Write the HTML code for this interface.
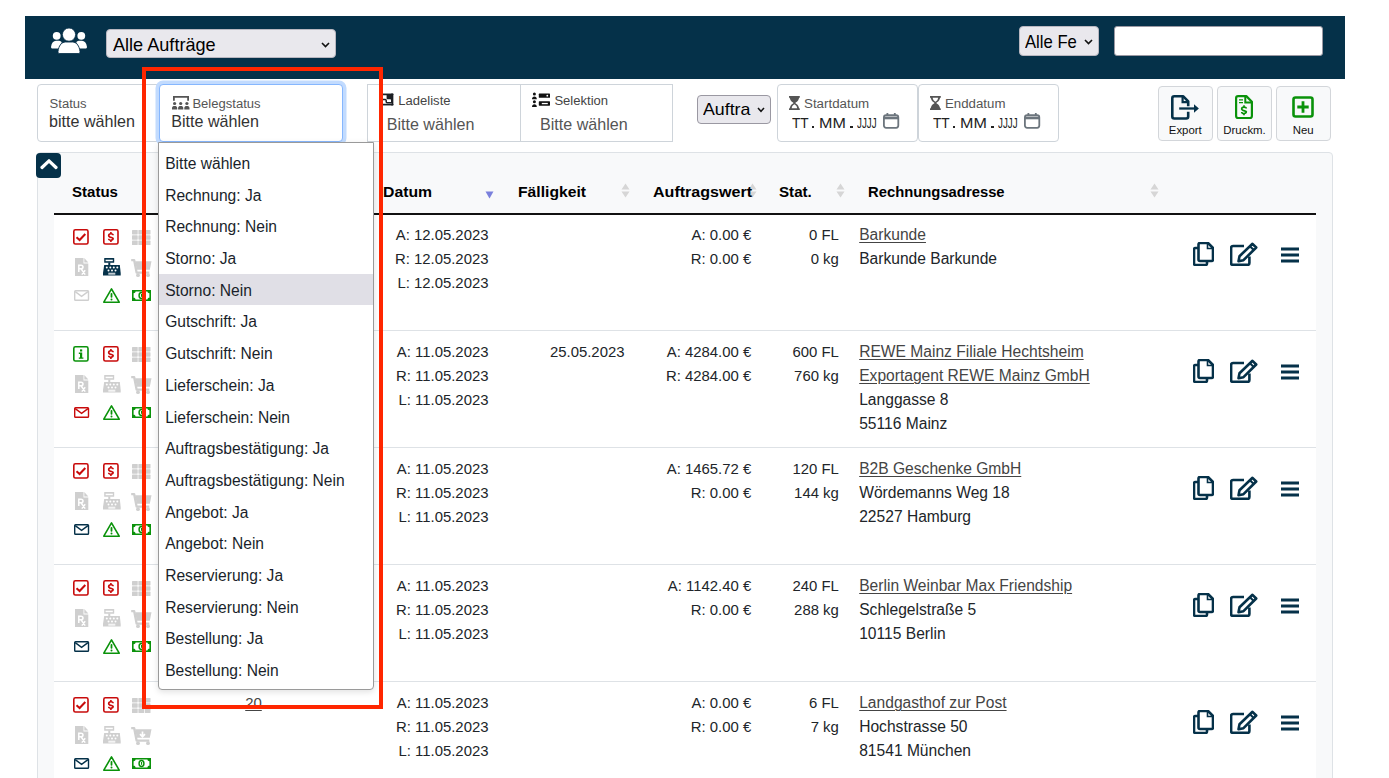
<!DOCTYPE html><html><head><meta charset="utf-8"><style>
html,body{margin:0;padding:0;background:#fff;width:1389px;height:778px;overflow:hidden;position:relative;font-family:"Liberation Sans",sans-serif;}
.t{position:absolute;white-space:nowrap;}
svg{display:block}
</style></head><body>
<div style="position:absolute;left:25.00px;top:16.00px;width:1320.00px;height:63.00px;background:#053149;"></div>
<svg style="position:absolute;left:51.00px;top:27.50px;" width="36.00" height="26.00" viewBox="0 0 36 26">
<circle cx="5.7" cy="7.8" r="3.9" fill="#fff"/>
<circle cx="30.3" cy="7.8" r="3.9" fill="#fff"/>
<path d="M1.5 20.5 C0.3 20.5 -0.1 19.6 0.1 18.4 C0.6 15 2.5 12.8 5 12.8 H7 C8.5 12.8 9.8 13.3 10.8 14.2 C9.5 15.8 8.6 18 8.3 20.5 Z" fill="#fff"/>
<path d="M34.5 20.5 C35.7 20.5 36.1 19.6 35.9 18.4 C35.4 15 33.5 12.8 31 12.8 H29 C27.5 12.8 26.2 13.3 25.2 14.2 C26.5 15.8 27.4 18 27.7 20.5 Z" fill="#fff"/>
<circle cx="18" cy="6.6" r="6.6" fill="#fff" stroke="#062e48" stroke-width="0.8"/>
<path d="M8.8 25.6 C7.4 25.6 6.8 24.7 7 23.4 C7.6 18 10.5 14 14.5 14 H21.5 C25.5 14 28.4 18 29 23.4 C29.2 24.7 28.6 25.6 27.2 25.6 Z" fill="#fff" stroke="#062e48" stroke-width="0.9"/>
</svg>
<div style="position:absolute;left:106.00px;top:29.00px;width:230.00px;height:29.00px;box-sizing:border-box;background:#e9e8ed;border:1px solid #b9b7c0;border-radius:4px;"></div>
<div class="t" style="left:112.50px;top:34.00px;font-size:18.10px;line-height:22px;color:#000;transform:scaleX(1.0007);transform-origin:0 0;">Alle Aufträge</div>
<svg style="position:absolute;left:320.50px;top:41.50px;" width="9.00" height="6.00" viewBox="0 0 9 6"><path d="M1 1 L4.5 4.6 L8 1" stroke="#111" stroke-width="1.6" fill="none"/></svg>
<div style="position:absolute;left:1019.00px;top:26.00px;width:80.00px;height:30.00px;box-sizing:border-box;background:#e9e8ed;border:1px solid #b9b7c0;border-radius:4px;"></div>
<div class="t" style="left:1025.40px;top:31.00px;font-size:18.10px;line-height:22px;color:#000;transform:scaleX(0.9202);transform-origin:0 0;">Alle Fe</div>
<svg style="position:absolute;left:1083.50px;top:38.50px;" width="9.00" height="6.00" viewBox="0 0 9 6"><path d="M1 1 L4.5 4.6 L8 1" stroke="#111" stroke-width="1.6" fill="none"/></svg>
<div style="position:absolute;left:1114.00px;top:26.00px;width:209.00px;height:30.00px;box-sizing:border-box;background:#fff;border:1px solid #9a98a2;border-radius:3px;"></div>
<div style="position:absolute;left:37.00px;top:84.00px;width:126.00px;height:57.50px;box-sizing:border-box;border:1px solid #ced4da;border-radius:4px 0 0 4px;background:#fff;"></div>
<div class="t" style="left:49.60px;top:96.00px;font-size:13.05px;line-height:16px;color:#555;">Status</div>
<div class="t" style="left:49.00px;top:112.00px;font-size:16.10px;line-height:19px;color:#333;">bitte wählen</div>
<div style="position:absolute;left:159.00px;top:84.00px;width:184.00px;height:57.50px;box-sizing:border-box;border:1px solid #86b7fe;border-radius:4px;background:#fff;box-shadow:0 0 0 3.5px #c2dbfe;"></div>
<svg style="position:absolute;left:172.00px;top:95.00px;" width="18.00" height="15.00" viewBox="0 0 18 15">
<path d="M1.9 5.8 V1.8 H16.1 V5.8" stroke="#555" stroke-width="1.8" fill="none"/>
<circle cx="2.6" cy="8.5" r="1.6" fill="#555"/><circle cx="8.7" cy="8.5" r="1.6" fill="#555"/><circle cx="14.9" cy="8.5" r="1.6" fill="#555"/>
<path d="M0 14.6 V13 C0 11.5 1 10.9 2.6 10.9 C4.2 10.9 5.2 11.5 5.2 13 V14.6 Z M6.1 14.6 V13 C6.1 11.5 7.1 10.9 8.7 10.9 C10.3 10.9 11.3 11.5 11.3 13 V14.6 Z M12.3 14.6 V13 C12.3 11.5 13.3 10.9 14.9 10.9 C16.5 10.9 17.5 11.5 17.5 13 V14.6 Z" fill="#555"/>
</svg>
<div class="t" style="left:192.40px;top:96.00px;font-size:13.05px;line-height:16px;color:#555;">Belegstatus</div>
<div class="t" style="left:171.30px;top:112.00px;font-size:16.10px;line-height:19px;color:#333;">Bitte wählen</div>
<div style="position:absolute;left:367.00px;top:84.00px;width:153.50px;height:57.50px;box-sizing:border-box;border:1px solid #ced4da;background:#fff;"></div>
<svg style="position:absolute;left:379.00px;top:93.00px;" width="15.00" height="13.00" viewBox="0 0 15 13">
<rect x="0.9" y="1.4" width="12.6" height="10.2" stroke="#1c1f24" stroke-width="1.7" fill="none"/>
<path d="M7.6 1.4 H13.5 V10.2 H12 V7.2 C12 6.6 11.6 6.2 11 6.2 H8.4 C7.9 6.2 7.6 5.9 7.6 5.4 Z" fill="#1c1f24"/>
<path d="M0.9 6.5 H6.3 C6.9 6.5 7.2 6.9 7.2 7.4 V8.8 C7.2 9.3 7.6 9.8 8.2 9.8 H12" stroke="#1c1f24" stroke-width="1.5" fill="none"/>
<path d="M12.6 0 L14.8 1.4 L12.6 2.8 Z M12.6 10.2 L14.8 11.6 L12.6 13 Z" fill="#1c1f24"/>
</svg>
<div class="t" style="left:398.30px;top:93.00px;font-size:13.05px;line-height:16px;color:#444;">Ladeliste</div>
<div class="t" style="left:386.70px;top:115.00px;font-size:16.10px;line-height:19px;color:#555;">Bitte wählen</div>
<div style="position:absolute;left:519.50px;top:84.00px;width:153.50px;height:57.50px;box-sizing:border-box;border:1px solid #ced4da;background:#fff;"></div>
<svg style="position:absolute;left:532.00px;top:92.00px;" width="18.00" height="16.00" viewBox="0 0 18 16">
<circle cx="2.4" cy="2" r="1.5" fill="#111"/><path d="M0 7.2 C0 5.2 1 4.4 2.4 4.4 C3.8 4.4 4.8 5.2 4.8 7.2Z" fill="#111"/>
<circle cx="2.4" cy="9.8" r="1.5" fill="#111"/><path d="M0 15 C0 13 1 12.2 2.4 12.2 C3.8 12.2 4.8 13 4.8 15Z" fill="#111"/>
<rect x="6.8" y="1.6" width="11.2" height="4.2" rx="0.6" fill="#111"/><circle cx="15.3" cy="3.7" r="0.9" fill="#fff"/>
<rect x="6.8" y="9.3" width="11.2" height="4.4" rx="0.6" fill="#111"/><rect x="9.8" y="10.9" width="6" height="1.3" fill="#fff"/>
</svg>
<div class="t" style="left:554.40px;top:93.00px;font-size:13.05px;line-height:16px;color:#444;">Selektion</div>
<div class="t" style="left:540.00px;top:115.00px;font-size:16.10px;line-height:19px;color:#555;">Bitte wählen</div>
<div style="position:absolute;left:697.00px;top:94.50px;width:74.00px;height:29.00px;box-sizing:border-box;background:#e9e8ed;border:1px solid #9a98a2;border-radius:4px;"></div>
<div class="t" style="left:703.00px;top:100.00px;font-size:16.20px;line-height:19px;color:#000;transform:scaleX(1.0982);transform-origin:0 0;">Auftra</div>
<svg style="position:absolute;left:756.50px;top:107.00px;" width="8.00" height="6.00" viewBox="0 0 8 6"><path d="M1 1 L4 4.3 L7 1" stroke="#111" stroke-width="1.5" fill="none"/></svg>
<div style="position:absolute;left:776.50px;top:84.00px;width:141.00px;height:57.50px;box-sizing:border-box;border:1px solid #ced4da;border-radius:4px;background:#fff;"></div>
<svg style="position:absolute;left:789.00px;top:96.00px;" width="11.00" height="14.00" viewBox="0 0 11 14"><path d="M0 0 H10.8 V1.4 C10.2 1.6 9.9 2 9.8 2.8 C9.4 5 7.2 6.3 6.2 7 C7.2 7.7 9.4 9 9.8 11.2 C9.9 12 10.2 12.4 10.8 12.6 V14 H0 V12.6 C0.6 12.4 0.9 12 1 11.2 C1.4 9 3.6 7.7 4.6 7 C3.6 6.3 1.4 5 1 2.8 C0.9 2 0.6 1.6 0 1.4 Z" fill="#555"/><path d="M5.4 8.3 C6.8 9.1 8 10.2 8.1 12.2 H2.7 C2.8 10.2 4 9.1 5.4 8.3 Z" fill="#fff"/></svg>
<div class="t" style="left:803.80px;top:96.00px;font-size:13.05px;line-height:16px;color:#555;transform:scaleX(1.0217);transform-origin:0 0;">Startdatum</div>
<div class="t" style="left:791.90px;top:114.00px;font-size:15.00px;line-height:18px;color:#222;transform:scaleX(0.9126);transform-origin:0 0;">TT</div>
<div style="position:absolute;left:811.90px;top:125.60px;width:2.40px;height:2.40px;background:#222;"></div>
<div class="t" style="left:818.80px;top:114.00px;font-size:15.00px;line-height:18px;color:#222;transform:scaleX(1.0731);transform-origin:0 0;">MM</div>
<div style="position:absolute;left:850.40px;top:125.60px;width:2.40px;height:2.40px;background:#222;"></div>
<div class="t" style="left:856.70px;top:114.00px;font-size:15.00px;line-height:18px;color:#222;transform:scaleX(0.6533);transform-origin:0 0;">JJJJ</div>
<svg style="position:absolute;left:882.80px;top:113.20px;" width="17.00" height="16.00" viewBox="0 0 17 16"><rect x="0.9" y="2.2" width="14.4" height="12.6" rx="2.2" stroke="#6c757d" stroke-width="1.8" fill="none"/><path d="M1 3.5 H15.2 V6.3 H1 Z" fill="#6c757d"/><path d="M4.4 0 V3 M11.8 0 V3" stroke="#6c757d" stroke-width="1.8"/></svg>
<div style="position:absolute;left:917.50px;top:84.00px;width:141.00px;height:57.50px;box-sizing:border-box;border:1px solid #ced4da;border-radius:4px;background:#fff;"></div>
<svg style="position:absolute;left:930.00px;top:96.00px;" width="11.00" height="14.00" viewBox="0 0 11 14"><path d="M0 0 H10.8 V1.4 C10.2 1.6 9.9 2 9.8 2.8 C9.4 5 7.2 6.3 6.2 7 C7.2 7.7 9.4 9 9.8 11.2 C9.9 12 10.2 12.4 10.8 12.6 V14 H0 V12.6 C0.6 12.4 0.9 12 1 11.2 C1.4 9 3.6 7.7 4.6 7 C3.6 6.3 1.4 5 1 2.8 C0.9 2 0.6 1.6 0 1.4 Z" fill="#555"/><path d="M5.4 5.7 C6.8 4.9 8 3.8 8.1 1.8 H2.7 C2.8 3.8 4 4.9 5.4 5.7 Z" fill="#fff"/></svg>
<div class="t" style="left:944.80px;top:96.00px;font-size:13.05px;line-height:16px;color:#555;transform:scaleX(1.0167);transform-origin:0 0;">Enddatum</div>
<div class="t" style="left:932.90px;top:114.00px;font-size:15.00px;line-height:18px;color:#222;transform:scaleX(0.9126);transform-origin:0 0;">TT</div>
<div style="position:absolute;left:952.90px;top:125.60px;width:2.40px;height:2.40px;background:#222;"></div>
<div class="t" style="left:959.80px;top:114.00px;font-size:15.00px;line-height:18px;color:#222;transform:scaleX(1.0731);transform-origin:0 0;">MM</div>
<div style="position:absolute;left:991.40px;top:125.60px;width:2.40px;height:2.40px;background:#222;"></div>
<div class="t" style="left:997.70px;top:114.00px;font-size:15.00px;line-height:18px;color:#222;transform:scaleX(0.6533);transform-origin:0 0;">JJJJ</div>
<svg style="position:absolute;left:1023.80px;top:113.20px;" width="17.00" height="16.00" viewBox="0 0 17 16"><rect x="0.9" y="2.2" width="14.4" height="12.6" rx="2.2" stroke="#6c757d" stroke-width="1.8" fill="none"/><path d="M1 3.5 H15.2 V6.3 H1 Z" fill="#6c757d"/><path d="M4.4 0 V3 M11.8 0 V3" stroke="#6c757d" stroke-width="1.8"/></svg>
<div style="position:absolute;left:1158.00px;top:86.00px;width:54.50px;height:54.50px;box-sizing:border-box;border:1px solid #d3d6da;border-radius:4px;background:#f8f9fa;"></div>
<svg style="position:absolute;left:1171px;top:95px" width="29" height="25" viewBox="0 0 29 25"><path d="M17.2 11.3 V6.3 L12.3 1.3 H3.3 C2.2 1.3 1.3 2.2 1.3 3.3 V21.5 C1.3 22.6 2.2 23.5 3.3 23.5 H15.2 C16.3 23.5 17.2 22.6 17.2 21.5 V16.8" stroke="#053149" stroke-width="2.6" fill="none" stroke-linejoin="round"/><path d="M11.6 1.5 V7.1 H17" stroke="#053149" stroke-width="2.2" fill="none"/><path d="M8.2 13.5 H23.5" stroke="#053149" stroke-width="2.3"/><path d="M23 9.3 L27.9 13.5 L23 17.7 Z" fill="#053149"/></svg>
<div class="t" style="left:1185.25px;width:0;display:flex;justify-content:center;top:123.00px;font-size:11.40px;line-height:14px;color:#111;">Export</div>
<div style="position:absolute;left:1217.30px;top:86.00px;width:54.50px;height:54.50px;box-sizing:border-box;border:1px solid #d3d6da;border-radius:4px;background:#f8f9fa;"></div>
<svg style="position:absolute;left:1235px;top:94.7px" width="18" height="25" viewBox="0 0 18 25"><path d="M11.3 1.1 H3.1 C2 1.1 1.1 2 1.1 3.1 V21 C1.1 22.1 2 23 3.1 23 H14.9 C16 23 16.9 22.1 16.9 21 V6.7 Z" stroke="#0a920a" stroke-width="2.2" fill="none" stroke-linejoin="round"/><path d="M10.3 1.5 V7.5 H16.5" stroke="#0a920a" stroke-width="2" fill="none"/><path d="M4 4.8 H8 M4 7.6 H8" stroke="#0a920a" stroke-width="1.2"/><path d="M9 10.3 V12.100000000000001 M9 18.5 V20.3" stroke="#0a920a" stroke-width="1.6"/><path d="M11.3 13.600000000000001 C11.3 11.5 6.7 11.5 6.7 14.0 C6.7 16.0 11.3 15.600000000000001 11.3 16.6 C11.3 19.1 6.7 19.1 6.7 17.0" stroke="#0a920a" stroke-width="1.7" fill="none"/></svg>
<div class="t" style="left:1244.55px;width:0;display:flex;justify-content:center;top:123.00px;font-size:11.40px;line-height:14px;color:#111;">Druckm.</div>
<div style="position:absolute;left:1276.00px;top:86.00px;width:54.50px;height:54.50px;box-sizing:border-box;border:1px solid #d3d6da;border-radius:4px;background:#f8f9fa;"></div>
<svg style="position:absolute;left:1292.0px;top:96px" width="22" height="22" viewBox="0 0 22 22"><rect x="1.5" y="1.5" width="19" height="19" rx="2" stroke="#0a920a" stroke-width="2.6" fill="none"/><path d="M11 5.3 V16.7 M5.3 11 H16.7" stroke="#0a920a" stroke-width="2.8"/></svg>
<div class="t" style="left:1303.25px;width:0;display:flex;justify-content:center;top:123.00px;font-size:11.40px;line-height:14px;color:#111;">Neu</div>
<div style="position:absolute;left:37.00px;top:152.00px;width:1296.00px;height:640.00px;box-sizing:border-box;border:1px solid #dee2e6;border-radius:4px;background:#f8f9fa;"></div>
<div style="position:absolute;left:36.00px;top:153.00px;width:25.00px;height:25.00px;background:#053149;border-radius:4px;"></div>
<svg style="position:absolute;left:39.50px;top:158.00px;" width="18.00" height="12.00" viewBox="0 0 18 12"><path d="M2 9.5 L9 2.8 L16 9.5" stroke="#fff" stroke-width="3.2" fill="none" stroke-linecap="round" stroke-linejoin="round"/></svg>
<svg style="position:absolute;left:485.30px;top:190.50px;" width="9.00" height="8.00" viewBox="0 0 9 8"><path d="M0.5 0.5 H8.5 L4.5 7.5 Z" fill="#7a80dc"/></svg>
<svg style="position:absolute;left:621.30px;top:183.00px;" width="9.00" height="15.00" viewBox="0 0 9 15"><path d="M4.5 0.5 L8.5 6.5 H0.5 Z M4.5 14.5 L8.5 8.5 H0.5 Z" fill="#d6d6d6"/></svg>
<svg style="position:absolute;left:748.00px;top:183.00px;" width="9.00" height="15.00" viewBox="0 0 9 15"><path d="M4.5 0.5 L8.5 6.5 H0.5 Z M4.5 14.5 L8.5 8.5 H0.5 Z" fill="#d6d6d6"/></svg>
<svg style="position:absolute;left:835.50px;top:183.00px;" width="9.00" height="15.00" viewBox="0 0 9 15"><path d="M4.5 0.5 L8.5 6.5 H0.5 Z M4.5 14.5 L8.5 8.5 H0.5 Z" fill="#d6d6d6"/></svg>
<svg style="position:absolute;left:1150.00px;top:183.00px;" width="9.00" height="15.00" viewBox="0 0 9 15"><path d="M4.5 0.5 L8.5 6.5 H0.5 Z M4.5 14.5 L8.5 8.5 H0.5 Z" fill="#d6d6d6"/></svg>
<div class="t" style="left:71.90px;top:182.00px;font-size:15.50px;line-height:19px;font-weight:700;color:#000;transform:scaleX(0.9693);transform-origin:0 0;">Status</div>
<div class="t" style="left:382.80px;top:182.00px;font-size:15.50px;line-height:19px;font-weight:700;color:#000;transform:scaleX(1.0165);transform-origin:0 0;">Datum</div>
<div class="t" style="left:517.90px;top:182.00px;font-size:15.50px;line-height:19px;font-weight:700;color:#000;transform:scaleX(1.0120);transform-origin:0 0;">Fälligkeit</div>
<div class="t" style="left:653.30px;top:182.00px;font-size:15.50px;line-height:19px;font-weight:700;color:#000;transform:scaleX(1.0362);transform-origin:0 0;">Auftragswert</div>
<div class="t" style="left:779.00px;top:182.00px;font-size:15.50px;line-height:19px;font-weight:700;color:#000;transform:scaleX(0.9774);transform-origin:0 0;">Stat.</div>
<div class="t" style="left:867.80px;top:182.00px;font-size:15.50px;line-height:19px;font-weight:700;color:#000;transform:scaleX(0.9553);transform-origin:0 0;">Rechnungsadresse</div>
<div style="position:absolute;left:54.00px;top:213.00px;width:1262.00px;height:2.00px;background:#111;"></div>
<div style="position:absolute;left:54.00px;top:215.00px;width:1262.00px;height:563.00px;background:#fff;"></div>
<div style="position:absolute;left:54.00px;top:330.00px;width:1262.00px;height:1.00px;background:#dee2e6;"></div>
<div style="position:absolute;left:54.00px;top:447.00px;width:1262.00px;height:1.00px;background:#dee2e6;"></div>
<div style="position:absolute;left:54.00px;top:564.00px;width:1262.00px;height:1.00px;background:#dee2e6;"></div>
<div style="position:absolute;left:54.00px;top:681.00px;width:1262.00px;height:1.00px;background:#dee2e6;"></div>
<svg style="position:absolute;left:73.20px;top:229.00px;" width="16.00" height="16.00" viewBox="0 0 16 16"><rect x="0.8" y="0.8" width="14.2" height="14.2" rx="1.6" stroke="#c80b0b" stroke-width="1.6" fill="none"/><path d="M3.5 8.2 L6.6 11 L12.3 5" stroke="#c80b0b" stroke-width="2" fill="none"/></svg>
<svg style="position:absolute;left:103.20px;top:229.00px;" width="16.00" height="16.00" viewBox="0 0 16 16"><rect x="0.8" y="0.8" width="14.2" height="14.2" rx="1.6" stroke="#c80b0b" stroke-width="1.6" fill="none"/><path d="M7.9 3.0 V4.8 M7.9 11.2 V13.0" stroke="#c80b0b" stroke-width="1.6"/><path d="M10.100000000000001 6.3 C10.100000000000001 4.2 5.7 4.2 5.7 6.7 C5.7 8.7 10.100000000000001 8.3 10.100000000000001 9.3 C10.100000000000001 11.8 5.7 11.8 5.7 9.7" stroke="#c80b0b" stroke-width="1.7" fill="none"/></svg>
<svg style="position:absolute;left:132.20px;top:229.50px;" width="19.00" height="16.00" viewBox="0 0 19 16"><rect x="0.0" y="0.0" width="5.7" height="4.4" rx="0.6" fill="#cfcfcf"/><rect x="0.0" y="5.3" width="5.7" height="4.4" rx="0.6" fill="#cfcfcf"/><rect x="0.0" y="10.6" width="5.7" height="4.4" rx="0.6" fill="#cfcfcf"/><rect x="6.4" y="0.0" width="5.7" height="4.4" rx="0.6" fill="#cfcfcf"/><rect x="6.4" y="5.3" width="5.7" height="4.4" rx="0.6" fill="#cfcfcf"/><rect x="6.4" y="10.6" width="5.7" height="4.4" rx="0.6" fill="#cfcfcf"/><rect x="12.8" y="0.0" width="5.7" height="4.4" rx="0.6" fill="#cfcfcf"/><rect x="12.8" y="5.3" width="5.7" height="4.4" rx="0.6" fill="#cfcfcf"/><rect x="12.8" y="10.6" width="5.7" height="4.4" rx="0.6" fill="#cfcfcf"/></svg>
<svg style="position:absolute;left:74.80px;top:258.00px;" width="14.00" height="18.00" viewBox="0 0 14 18"><path d="M0 0 H8.5 V5.5 H13.3 V18 H0 Z" fill="#cfcfcf"/><path d="M9.3 0 L13.3 4.5 H9.3 Z" fill="#cfcfcf"/><path d="M3.8 14 V7.2 H6 C7.3 7.2 8 7.9 8 9 C8 10.1 7.3 10.8 6 10.8 H3.8 M6 10.8 L10.2 16.6 M10.2 12.2 L6.8 16.6" stroke="#fff" stroke-width="1.5" fill="none"/></svg>
<svg style="position:absolute;left:102.70px;top:258.00px;" width="18.00" height="18.00" viewBox="0 0 18 18"><rect x="1.2" y="0" width="10" height="4.8" rx="0.5" fill="#053149"/><rect x="2.6" y="1.7" width="7.2" height="1.5" fill="#fff"/><rect x="5.3" y="4.5" width="2" height="3" fill="#053149"/><path d="M1.2 7 H16.8 L17.7 15 V17.6 H0 V15 Z" fill="#053149"/><circle cx="3.8" cy="9.4" r="1" fill="#fff"/><circle cx="7.3" cy="9.4" r="1" fill="#fff"/><circle cx="10.8" cy="9.4" r="1" fill="#fff"/><circle cx="14.3" cy="9.4" r="1" fill="#fff"/><circle cx="5.5" cy="12.4" r="1" fill="#fff"/><circle cx="9.0" cy="12.4" r="1" fill="#fff"/><circle cx="12.5" cy="12.4" r="1" fill="#fff"/><rect x="5.3" y="14.7" width="7" height="2" fill="#fff" opacity="0.75"/></svg>
<svg style="position:absolute;left:131.00px;top:258.50px;" width="21.00" height="19.00" viewBox="0 0 21 19"><path d="M0.2 1.2 H3.2 L5.6 13.6 H18.3" stroke="#cfcfcf" stroke-width="2.3" fill="none" stroke-linejoin="round"/><path d="M4.2 2.3 H20.5 L18.8 10.8 H5.8 Z" fill="#cfcfcf"/><circle cx="7" cy="16.2" r="1.9" fill="#cfcfcf"/><circle cx="17" cy="16.2" r="1.9" fill="#cfcfcf"/></svg>
<svg style="position:absolute;left:74.00px;top:290.00px;" width="16.00" height="12.00" viewBox="0 0 16 12"><rect x="0.7" y="0.7" width="13.8" height="9.6" rx="0.8" stroke="#cfcfcf" stroke-width="1.4" fill="none"/><path d="M1.2 1.6 L7.6 6.4 L14 1.6" stroke="#cfcfcf" stroke-width="1.4" fill="none"/></svg>
<svg style="position:absolute;left:102.80px;top:287.80px;" width="18.00" height="16.00" viewBox="0 0 18 16"><path d="M8.5 0.9 L16.2 14.2 H0.8 Z" stroke="#0a920a" stroke-width="1.6" fill="none" stroke-linejoin="round"/><rect x="7.6" y="5" width="1.8" height="4.8" rx="0.8" fill="#0a920a"/><circle cx="8.5" cy="11.6" r="1" fill="#0a920a"/></svg>
<svg style="position:absolute;left:132.20px;top:290.00px;" width="20.00" height="12.00" viewBox="0 0 20 12"><path d="M0 0 H19 V11 H0 Z M1.6 3.2 C2.8 3.2 3.4 2.6 3.6 1.5 H15.4 C15.6 2.6 16.2 3.2 17.4 3.2 V7.8 C16.2 7.8 15.6 8.4 15.4 9.5 H3.6 C3.4 8.4 2.8 7.8 1.6 7.8 Z" fill="#0a920a" fill-rule="evenodd"/><ellipse cx="9.5" cy="5.4" rx="2.4" ry="3" stroke="#0a920a" stroke-width="1.5" fill="none"/><rect x="9" y="4" width="1.1" height="2.8" fill="#0a920a"/></svg>
<div class="t" style="right:900.50px;top:226.00px;font-size:14.90px;line-height:18px;color:#212529;">A: 12.05.2023</div>
<div class="t" style="right:900.50px;top:250.00px;font-size:14.90px;line-height:18px;color:#212529;">R: 12.05.2023</div>
<div class="t" style="right:900.50px;top:274.00px;font-size:14.90px;line-height:18px;color:#212529;">L: 12.05.2023</div>
<div class="t" style="right:637.80px;top:226.00px;font-size:14.90px;line-height:18px;color:#212529;">A: 0.00 €</div>
<div class="t" style="right:637.80px;top:250.00px;font-size:14.90px;line-height:18px;color:#212529;">R: 0.00 €</div>
<div class="t" style="right:550.20px;top:226.00px;font-size:14.90px;line-height:18px;color:#212529;">0 FL</div>
<div class="t" style="right:550.20px;top:250.00px;font-size:14.90px;line-height:18px;color:#212529;">0 kg</div>
<div class="t" style="left:859.20px;top:225.00px;font-size:15.60px;line-height:19px;color:#444;text-decoration:underline;text-decoration-thickness:1px;text-underline-offset:2px;">Barkunde</div>
<div class="t" style="left:859.20px;top:249.00px;font-size:15.60px;line-height:19px;color:#212529;">Barkunde Barkunde</div>
<svg style="position:absolute;left:1193.00px;top:242.00px;" width="21.00" height="24.00" viewBox="0 0 21 24"><path d="M14 19.5 V21.5 C14 22.3 13.3 23 12.5 23 H2.5 C1.7 23 1 22.3 1 21.5 V7.5 C1 6.7 1.7 6 2.5 6 H5" stroke="#053149" stroke-width="2.6" fill="none"/><path d="M5.5 2.5 C5.5 1.7 6.2 1 7 1 H15 L20 6 V17.5 C20 18.3 19.3 19 18.5 19 H7 C6.2 19 5.5 18.3 5.5 17.5 Z" stroke="#053149" stroke-width="2.6" fill="none" stroke-linejoin="round"/><path d="M14.5 1.5 V6.5 H19.5" stroke="#053149" stroke-width="1.6" fill="none"/></svg>
<svg style="position:absolute;left:1230.00px;top:242.00px;" width="28.00" height="24.00" viewBox="0 0 28 24"><path d="M14 4 H3 C1.9 4 1.1 4.8 1.1 5.9 V21 C1.1 22.1 1.9 22.9 3 22.9 H17.5 C18.6 22.9 19.4 22.1 19.4 21 V14.5" stroke="#053149" stroke-width="2.6" fill="none"/><path d="M22.5 1.8 L26.2 5.5 L13.5 18.2 L8.5 19.2 L9.5 14.2 Z" stroke="#053149" stroke-width="2.6" fill="none" stroke-linejoin="round"/><path d="M20 4.3 L23.7 8" stroke="#053149" stroke-width="2"/></svg>
<svg style="position:absolute;left:1281.00px;top:246.50px;" width="18.00" height="16.00" viewBox="0 0 18 16"><path d="M0 2 H18 M0 8 H18 M0 14 H18" stroke="#053149" stroke-width="3"/></svg>
<svg style="position:absolute;left:73.20px;top:346.00px;" width="16.00" height="16.00" viewBox="0 0 16 16"><rect x="0.8" y="0.8" width="14.2" height="14.2" rx="1.6" stroke="#0a920a" stroke-width="1.6" fill="none"/><rect x="7" y="3.4" width="2.2" height="2.1" fill="#0a920a"/><path d="M5.8 6.6 H9.2 V11.4 H10.4 V12.8 H5.8 V11.4 H7 V8 H5.8 Z" fill="#0a920a"/></svg>
<svg style="position:absolute;left:103.20px;top:346.00px;" width="16.00" height="16.00" viewBox="0 0 16 16"><rect x="0.8" y="0.8" width="14.2" height="14.2" rx="1.6" stroke="#c80b0b" stroke-width="1.6" fill="none"/><path d="M7.9 3.0 V4.8 M7.9 11.2 V13.0" stroke="#c80b0b" stroke-width="1.6"/><path d="M10.100000000000001 6.3 C10.100000000000001 4.2 5.7 4.2 5.7 6.7 C5.7 8.7 10.100000000000001 8.3 10.100000000000001 9.3 C10.100000000000001 11.8 5.7 11.8 5.7 9.7" stroke="#c80b0b" stroke-width="1.7" fill="none"/></svg>
<svg style="position:absolute;left:132.20px;top:346.50px;" width="19.00" height="16.00" viewBox="0 0 19 16"><rect x="0.0" y="0.0" width="5.7" height="4.4" rx="0.6" fill="#cfcfcf"/><rect x="0.0" y="5.3" width="5.7" height="4.4" rx="0.6" fill="#cfcfcf"/><rect x="0.0" y="10.6" width="5.7" height="4.4" rx="0.6" fill="#cfcfcf"/><rect x="6.4" y="0.0" width="5.7" height="4.4" rx="0.6" fill="#cfcfcf"/><rect x="6.4" y="5.3" width="5.7" height="4.4" rx="0.6" fill="#cfcfcf"/><rect x="6.4" y="10.6" width="5.7" height="4.4" rx="0.6" fill="#cfcfcf"/><rect x="12.8" y="0.0" width="5.7" height="4.4" rx="0.6" fill="#cfcfcf"/><rect x="12.8" y="5.3" width="5.7" height="4.4" rx="0.6" fill="#cfcfcf"/><rect x="12.8" y="10.6" width="5.7" height="4.4" rx="0.6" fill="#cfcfcf"/></svg>
<svg style="position:absolute;left:74.80px;top:375.00px;" width="14.00" height="18.00" viewBox="0 0 14 18"><path d="M0 0 H8.5 V5.5 H13.3 V18 H0 Z" fill="#cfcfcf"/><path d="M9.3 0 L13.3 4.5 H9.3 Z" fill="#cfcfcf"/><path d="M3.8 14 V7.2 H6 C7.3 7.2 8 7.9 8 9 C8 10.1 7.3 10.8 6 10.8 H3.8 M6 10.8 L10.2 16.6 M10.2 12.2 L6.8 16.6" stroke="#fff" stroke-width="1.5" fill="none"/></svg>
<svg style="position:absolute;left:102.70px;top:375.00px;" width="18.00" height="18.00" viewBox="0 0 18 18"><rect x="1.2" y="0" width="10" height="4.8" rx="0.5" fill="#cfcfcf"/><rect x="2.6" y="1.7" width="7.2" height="1.5" fill="#fff"/><rect x="5.3" y="4.5" width="2" height="3" fill="#cfcfcf"/><path d="M1.2 7 H16.8 L17.7 15 V17.6 H0 V15 Z" fill="#cfcfcf"/><circle cx="3.8" cy="9.4" r="1" fill="#fff"/><circle cx="7.3" cy="9.4" r="1" fill="#fff"/><circle cx="10.8" cy="9.4" r="1" fill="#fff"/><circle cx="14.3" cy="9.4" r="1" fill="#fff"/><circle cx="5.5" cy="12.4" r="1" fill="#fff"/><circle cx="9.0" cy="12.4" r="1" fill="#fff"/><circle cx="12.5" cy="12.4" r="1" fill="#fff"/><rect x="5.3" y="14.7" width="7" height="2" fill="#fff" opacity="0.75"/></svg>
<svg style="position:absolute;left:131.00px;top:375.50px;" width="21.00" height="19.00" viewBox="0 0 21 19"><path d="M0.2 1.2 H3.2 L5.6 13.6 H18.3" stroke="#cfcfcf" stroke-width="2.3" fill="none" stroke-linejoin="round"/><path d="M4.2 2.3 H20.5 L18.8 10.8 H5.8 Z" fill="#cfcfcf"/><circle cx="7" cy="16.2" r="1.9" fill="#cfcfcf"/><circle cx="17" cy="16.2" r="1.9" fill="#cfcfcf"/></svg>
<svg style="position:absolute;left:74.00px;top:407.00px;" width="16.00" height="12.00" viewBox="0 0 16 12"><rect x="0.7" y="0.7" width="13.8" height="9.6" rx="0.8" stroke="#c80b0b" stroke-width="1.4" fill="none"/><path d="M1.2 1.6 L7.6 6.4 L14 1.6" stroke="#c80b0b" stroke-width="1.4" fill="none"/></svg>
<svg style="position:absolute;left:102.80px;top:404.80px;" width="18.00" height="16.00" viewBox="0 0 18 16"><path d="M8.5 0.9 L16.2 14.2 H0.8 Z" stroke="#0a920a" stroke-width="1.6" fill="none" stroke-linejoin="round"/><rect x="7.6" y="5" width="1.8" height="4.8" rx="0.8" fill="#0a920a"/><circle cx="8.5" cy="11.6" r="1" fill="#0a920a"/></svg>
<svg style="position:absolute;left:132.20px;top:407.00px;" width="20.00" height="12.00" viewBox="0 0 20 12"><path d="M0 0 H19 V11 H0 Z M1.6 3.2 C2.8 3.2 3.4 2.6 3.6 1.5 H15.4 C15.6 2.6 16.2 3.2 17.4 3.2 V7.8 C16.2 7.8 15.6 8.4 15.4 9.5 H3.6 C3.4 8.4 2.8 7.8 1.6 7.8 Z" fill="#0a920a" fill-rule="evenodd"/><ellipse cx="9.5" cy="5.4" rx="2.4" ry="3" stroke="#0a920a" stroke-width="1.5" fill="none"/><rect x="9" y="4" width="1.1" height="2.8" fill="#0a920a"/></svg>
<div class="t" style="right:900.50px;top:343.00px;font-size:14.90px;line-height:18px;color:#212529;">A: 11.05.2023</div>
<div class="t" style="right:900.50px;top:367.00px;font-size:14.90px;line-height:18px;color:#212529;">R: 11.05.2023</div>
<div class="t" style="right:900.50px;top:391.00px;font-size:14.90px;line-height:18px;color:#212529;">L: 11.05.2023</div>
<div class="t" style="right:764.50px;top:343.00px;font-size:14.90px;line-height:18px;color:#212529;">25.05.2023</div>
<div class="t" style="right:637.80px;top:343.00px;font-size:14.90px;line-height:18px;color:#212529;">A: 4284.00 €</div>
<div class="t" style="right:637.80px;top:367.00px;font-size:14.90px;line-height:18px;color:#212529;">R: 4284.00 €</div>
<div class="t" style="right:550.20px;top:343.00px;font-size:14.90px;line-height:18px;color:#212529;">600 FL</div>
<div class="t" style="right:550.20px;top:367.00px;font-size:14.90px;line-height:18px;color:#212529;">760 kg</div>
<div class="t" style="left:859.20px;top:342.00px;font-size:15.60px;line-height:19px;color:#444;text-decoration:underline;text-decoration-thickness:1px;text-underline-offset:2px;">REWE Mainz Filiale Hechtsheim</div>
<div class="t" style="left:859.20px;top:366.00px;font-size:15.60px;line-height:19px;color:#444;text-decoration:underline;text-decoration-thickness:1px;text-underline-offset:2px;">Exportagent REWE Mainz GmbH</div>
<div class="t" style="left:859.20px;top:390.00px;font-size:15.60px;line-height:19px;color:#212529;">Langgasse 8</div>
<div class="t" style="left:859.20px;top:414.00px;font-size:15.60px;line-height:19px;color:#212529;">55116 Mainz</div>
<svg style="position:absolute;left:1193.00px;top:359.00px;" width="21.00" height="24.00" viewBox="0 0 21 24"><path d="M14 19.5 V21.5 C14 22.3 13.3 23 12.5 23 H2.5 C1.7 23 1 22.3 1 21.5 V7.5 C1 6.7 1.7 6 2.5 6 H5" stroke="#053149" stroke-width="2.6" fill="none"/><path d="M5.5 2.5 C5.5 1.7 6.2 1 7 1 H15 L20 6 V17.5 C20 18.3 19.3 19 18.5 19 H7 C6.2 19 5.5 18.3 5.5 17.5 Z" stroke="#053149" stroke-width="2.6" fill="none" stroke-linejoin="round"/><path d="M14.5 1.5 V6.5 H19.5" stroke="#053149" stroke-width="1.6" fill="none"/></svg>
<svg style="position:absolute;left:1230.00px;top:359.00px;" width="28.00" height="24.00" viewBox="0 0 28 24"><path d="M14 4 H3 C1.9 4 1.1 4.8 1.1 5.9 V21 C1.1 22.1 1.9 22.9 3 22.9 H17.5 C18.6 22.9 19.4 22.1 19.4 21 V14.5" stroke="#053149" stroke-width="2.6" fill="none"/><path d="M22.5 1.8 L26.2 5.5 L13.5 18.2 L8.5 19.2 L9.5 14.2 Z" stroke="#053149" stroke-width="2.6" fill="none" stroke-linejoin="round"/><path d="M20 4.3 L23.7 8" stroke="#053149" stroke-width="2"/></svg>
<svg style="position:absolute;left:1281.00px;top:363.50px;" width="18.00" height="16.00" viewBox="0 0 18 16"><path d="M0 2 H18 M0 8 H18 M0 14 H18" stroke="#053149" stroke-width="3"/></svg>
<svg style="position:absolute;left:73.20px;top:463.00px;" width="16.00" height="16.00" viewBox="0 0 16 16"><rect x="0.8" y="0.8" width="14.2" height="14.2" rx="1.6" stroke="#c80b0b" stroke-width="1.6" fill="none"/><path d="M3.5 8.2 L6.6 11 L12.3 5" stroke="#c80b0b" stroke-width="2" fill="none"/></svg>
<svg style="position:absolute;left:103.20px;top:463.00px;" width="16.00" height="16.00" viewBox="0 0 16 16"><rect x="0.8" y="0.8" width="14.2" height="14.2" rx="1.6" stroke="#c80b0b" stroke-width="1.6" fill="none"/><path d="M7.9 3.0 V4.8 M7.9 11.2 V13.0" stroke="#c80b0b" stroke-width="1.6"/><path d="M10.100000000000001 6.3 C10.100000000000001 4.2 5.7 4.2 5.7 6.7 C5.7 8.7 10.100000000000001 8.3 10.100000000000001 9.3 C10.100000000000001 11.8 5.7 11.8 5.7 9.7" stroke="#c80b0b" stroke-width="1.7" fill="none"/></svg>
<svg style="position:absolute;left:132.20px;top:463.50px;" width="19.00" height="16.00" viewBox="0 0 19 16"><rect x="0.0" y="0.0" width="5.7" height="4.4" rx="0.6" fill="#cfcfcf"/><rect x="0.0" y="5.3" width="5.7" height="4.4" rx="0.6" fill="#cfcfcf"/><rect x="0.0" y="10.6" width="5.7" height="4.4" rx="0.6" fill="#cfcfcf"/><rect x="6.4" y="0.0" width="5.7" height="4.4" rx="0.6" fill="#cfcfcf"/><rect x="6.4" y="5.3" width="5.7" height="4.4" rx="0.6" fill="#cfcfcf"/><rect x="6.4" y="10.6" width="5.7" height="4.4" rx="0.6" fill="#cfcfcf"/><rect x="12.8" y="0.0" width="5.7" height="4.4" rx="0.6" fill="#cfcfcf"/><rect x="12.8" y="5.3" width="5.7" height="4.4" rx="0.6" fill="#cfcfcf"/><rect x="12.8" y="10.6" width="5.7" height="4.4" rx="0.6" fill="#cfcfcf"/></svg>
<svg style="position:absolute;left:74.80px;top:492.00px;" width="14.00" height="18.00" viewBox="0 0 14 18"><path d="M0 0 H8.5 V5.5 H13.3 V18 H0 Z" fill="#cfcfcf"/><path d="M9.3 0 L13.3 4.5 H9.3 Z" fill="#cfcfcf"/><path d="M3.8 14 V7.2 H6 C7.3 7.2 8 7.9 8 9 C8 10.1 7.3 10.8 6 10.8 H3.8 M6 10.8 L10.2 16.6 M10.2 12.2 L6.8 16.6" stroke="#fff" stroke-width="1.5" fill="none"/></svg>
<svg style="position:absolute;left:102.70px;top:492.00px;" width="18.00" height="18.00" viewBox="0 0 18 18"><rect x="1.2" y="0" width="10" height="4.8" rx="0.5" fill="#cfcfcf"/><rect x="2.6" y="1.7" width="7.2" height="1.5" fill="#fff"/><rect x="5.3" y="4.5" width="2" height="3" fill="#cfcfcf"/><path d="M1.2 7 H16.8 L17.7 15 V17.6 H0 V15 Z" fill="#cfcfcf"/><circle cx="3.8" cy="9.4" r="1" fill="#fff"/><circle cx="7.3" cy="9.4" r="1" fill="#fff"/><circle cx="10.8" cy="9.4" r="1" fill="#fff"/><circle cx="14.3" cy="9.4" r="1" fill="#fff"/><circle cx="5.5" cy="12.4" r="1" fill="#fff"/><circle cx="9.0" cy="12.4" r="1" fill="#fff"/><circle cx="12.5" cy="12.4" r="1" fill="#fff"/><rect x="5.3" y="14.7" width="7" height="2" fill="#fff" opacity="0.75"/></svg>
<svg style="position:absolute;left:131.00px;top:492.50px;" width="21.00" height="19.00" viewBox="0 0 21 19"><path d="M0.2 1.2 H3.2 L5.6 13.6 H18.3" stroke="#cfcfcf" stroke-width="2.3" fill="none" stroke-linejoin="round"/><path d="M4.2 2.3 H20.5 L18.8 10.8 H5.8 Z" fill="#cfcfcf"/><circle cx="7" cy="16.2" r="1.9" fill="#cfcfcf"/><circle cx="17" cy="16.2" r="1.9" fill="#cfcfcf"/></svg>
<svg style="position:absolute;left:74.00px;top:524.00px;" width="16.00" height="12.00" viewBox="0 0 16 12"><rect x="0.7" y="0.7" width="13.8" height="9.6" rx="0.8" stroke="#053149" stroke-width="1.4" fill="none"/><path d="M1.2 1.6 L7.6 6.4 L14 1.6" stroke="#053149" stroke-width="1.4" fill="none"/></svg>
<svg style="position:absolute;left:102.80px;top:521.80px;" width="18.00" height="16.00" viewBox="0 0 18 16"><path d="M8.5 0.9 L16.2 14.2 H0.8 Z" stroke="#0a920a" stroke-width="1.6" fill="none" stroke-linejoin="round"/><rect x="7.6" y="5" width="1.8" height="4.8" rx="0.8" fill="#0a920a"/><circle cx="8.5" cy="11.6" r="1" fill="#0a920a"/></svg>
<svg style="position:absolute;left:132.20px;top:524.00px;" width="20.00" height="12.00" viewBox="0 0 20 12"><path d="M0 0 H19 V11 H0 Z M1.6 3.2 C2.8 3.2 3.4 2.6 3.6 1.5 H15.4 C15.6 2.6 16.2 3.2 17.4 3.2 V7.8 C16.2 7.8 15.6 8.4 15.4 9.5 H3.6 C3.4 8.4 2.8 7.8 1.6 7.8 Z" fill="#0a920a" fill-rule="evenodd"/><ellipse cx="9.5" cy="5.4" rx="2.4" ry="3" stroke="#0a920a" stroke-width="1.5" fill="none"/><rect x="9" y="4" width="1.1" height="2.8" fill="#0a920a"/></svg>
<div class="t" style="right:900.50px;top:460.00px;font-size:14.90px;line-height:18px;color:#212529;">A: 11.05.2023</div>
<div class="t" style="right:900.50px;top:484.00px;font-size:14.90px;line-height:18px;color:#212529;">R: 11.05.2023</div>
<div class="t" style="right:900.50px;top:508.00px;font-size:14.90px;line-height:18px;color:#212529;">L: 11.05.2023</div>
<div class="t" style="right:637.80px;top:460.00px;font-size:14.90px;line-height:18px;color:#212529;">A: 1465.72 €</div>
<div class="t" style="right:637.80px;top:484.00px;font-size:14.90px;line-height:18px;color:#212529;">R: 0.00 €</div>
<div class="t" style="right:550.20px;top:460.00px;font-size:14.90px;line-height:18px;color:#212529;">120 FL</div>
<div class="t" style="right:550.20px;top:484.00px;font-size:14.90px;line-height:18px;color:#212529;">144 kg</div>
<div class="t" style="left:859.20px;top:459.00px;font-size:15.60px;line-height:19px;color:#444;text-decoration:underline;text-decoration-thickness:1px;text-underline-offset:2px;">B2B Geschenke GmbH</div>
<div class="t" style="left:859.20px;top:483.00px;font-size:15.60px;line-height:19px;color:#212529;">Wördemanns Weg 18</div>
<div class="t" style="left:859.20px;top:507.00px;font-size:15.60px;line-height:19px;color:#212529;">22527 Hamburg</div>
<svg style="position:absolute;left:1193.00px;top:476.00px;" width="21.00" height="24.00" viewBox="0 0 21 24"><path d="M14 19.5 V21.5 C14 22.3 13.3 23 12.5 23 H2.5 C1.7 23 1 22.3 1 21.5 V7.5 C1 6.7 1.7 6 2.5 6 H5" stroke="#053149" stroke-width="2.6" fill="none"/><path d="M5.5 2.5 C5.5 1.7 6.2 1 7 1 H15 L20 6 V17.5 C20 18.3 19.3 19 18.5 19 H7 C6.2 19 5.5 18.3 5.5 17.5 Z" stroke="#053149" stroke-width="2.6" fill="none" stroke-linejoin="round"/><path d="M14.5 1.5 V6.5 H19.5" stroke="#053149" stroke-width="1.6" fill="none"/></svg>
<svg style="position:absolute;left:1230.00px;top:476.00px;" width="28.00" height="24.00" viewBox="0 0 28 24"><path d="M14 4 H3 C1.9 4 1.1 4.8 1.1 5.9 V21 C1.1 22.1 1.9 22.9 3 22.9 H17.5 C18.6 22.9 19.4 22.1 19.4 21 V14.5" stroke="#053149" stroke-width="2.6" fill="none"/><path d="M22.5 1.8 L26.2 5.5 L13.5 18.2 L8.5 19.2 L9.5 14.2 Z" stroke="#053149" stroke-width="2.6" fill="none" stroke-linejoin="round"/><path d="M20 4.3 L23.7 8" stroke="#053149" stroke-width="2"/></svg>
<svg style="position:absolute;left:1281.00px;top:480.50px;" width="18.00" height="16.00" viewBox="0 0 18 16"><path d="M0 2 H18 M0 8 H18 M0 14 H18" stroke="#053149" stroke-width="3"/></svg>
<svg style="position:absolute;left:73.20px;top:580.00px;" width="16.00" height="16.00" viewBox="0 0 16 16"><rect x="0.8" y="0.8" width="14.2" height="14.2" rx="1.6" stroke="#c80b0b" stroke-width="1.6" fill="none"/><path d="M3.5 8.2 L6.6 11 L12.3 5" stroke="#c80b0b" stroke-width="2" fill="none"/></svg>
<svg style="position:absolute;left:103.20px;top:580.00px;" width="16.00" height="16.00" viewBox="0 0 16 16"><rect x="0.8" y="0.8" width="14.2" height="14.2" rx="1.6" stroke="#c80b0b" stroke-width="1.6" fill="none"/><path d="M7.9 3.0 V4.8 M7.9 11.2 V13.0" stroke="#c80b0b" stroke-width="1.6"/><path d="M10.100000000000001 6.3 C10.100000000000001 4.2 5.7 4.2 5.7 6.7 C5.7 8.7 10.100000000000001 8.3 10.100000000000001 9.3 C10.100000000000001 11.8 5.7 11.8 5.7 9.7" stroke="#c80b0b" stroke-width="1.7" fill="none"/></svg>
<svg style="position:absolute;left:132.20px;top:580.50px;" width="19.00" height="16.00" viewBox="0 0 19 16"><rect x="0.0" y="0.0" width="5.7" height="4.4" rx="0.6" fill="#cfcfcf"/><rect x="0.0" y="5.3" width="5.7" height="4.4" rx="0.6" fill="#cfcfcf"/><rect x="0.0" y="10.6" width="5.7" height="4.4" rx="0.6" fill="#cfcfcf"/><rect x="6.4" y="0.0" width="5.7" height="4.4" rx="0.6" fill="#cfcfcf"/><rect x="6.4" y="5.3" width="5.7" height="4.4" rx="0.6" fill="#cfcfcf"/><rect x="6.4" y="10.6" width="5.7" height="4.4" rx="0.6" fill="#cfcfcf"/><rect x="12.8" y="0.0" width="5.7" height="4.4" rx="0.6" fill="#cfcfcf"/><rect x="12.8" y="5.3" width="5.7" height="4.4" rx="0.6" fill="#cfcfcf"/><rect x="12.8" y="10.6" width="5.7" height="4.4" rx="0.6" fill="#cfcfcf"/></svg>
<svg style="position:absolute;left:74.80px;top:609.00px;" width="14.00" height="18.00" viewBox="0 0 14 18"><path d="M0 0 H8.5 V5.5 H13.3 V18 H0 Z" fill="#cfcfcf"/><path d="M9.3 0 L13.3 4.5 H9.3 Z" fill="#cfcfcf"/><path d="M3.8 14 V7.2 H6 C7.3 7.2 8 7.9 8 9 C8 10.1 7.3 10.8 6 10.8 H3.8 M6 10.8 L10.2 16.6 M10.2 12.2 L6.8 16.6" stroke="#fff" stroke-width="1.5" fill="none"/></svg>
<svg style="position:absolute;left:102.70px;top:609.00px;" width="18.00" height="18.00" viewBox="0 0 18 18"><rect x="1.2" y="0" width="10" height="4.8" rx="0.5" fill="#cfcfcf"/><rect x="2.6" y="1.7" width="7.2" height="1.5" fill="#fff"/><rect x="5.3" y="4.5" width="2" height="3" fill="#cfcfcf"/><path d="M1.2 7 H16.8 L17.7 15 V17.6 H0 V15 Z" fill="#cfcfcf"/><circle cx="3.8" cy="9.4" r="1" fill="#fff"/><circle cx="7.3" cy="9.4" r="1" fill="#fff"/><circle cx="10.8" cy="9.4" r="1" fill="#fff"/><circle cx="14.3" cy="9.4" r="1" fill="#fff"/><circle cx="5.5" cy="12.4" r="1" fill="#fff"/><circle cx="9.0" cy="12.4" r="1" fill="#fff"/><circle cx="12.5" cy="12.4" r="1" fill="#fff"/><rect x="5.3" y="14.7" width="7" height="2" fill="#fff" opacity="0.75"/></svg>
<svg style="position:absolute;left:131.00px;top:609.50px;" width="21.00" height="19.00" viewBox="0 0 21 19"><path d="M0.2 1.2 H3.2 L5.6 13.6 H18.3" stroke="#cfcfcf" stroke-width="2.3" fill="none" stroke-linejoin="round"/><path d="M4.2 2.3 H20.5 L18.8 10.8 H5.8 Z" fill="#cfcfcf"/><circle cx="7" cy="16.2" r="1.9" fill="#cfcfcf"/><circle cx="17" cy="16.2" r="1.9" fill="#cfcfcf"/></svg>
<svg style="position:absolute;left:74.00px;top:641.00px;" width="16.00" height="12.00" viewBox="0 0 16 12"><rect x="0.7" y="0.7" width="13.8" height="9.6" rx="0.8" stroke="#053149" stroke-width="1.4" fill="none"/><path d="M1.2 1.6 L7.6 6.4 L14 1.6" stroke="#053149" stroke-width="1.4" fill="none"/></svg>
<svg style="position:absolute;left:102.80px;top:638.80px;" width="18.00" height="16.00" viewBox="0 0 18 16"><path d="M8.5 0.9 L16.2 14.2 H0.8 Z" stroke="#0a920a" stroke-width="1.6" fill="none" stroke-linejoin="round"/><rect x="7.6" y="5" width="1.8" height="4.8" rx="0.8" fill="#0a920a"/><circle cx="8.5" cy="11.6" r="1" fill="#0a920a"/></svg>
<svg style="position:absolute;left:132.20px;top:641.00px;" width="20.00" height="12.00" viewBox="0 0 20 12"><path d="M0 0 H19 V11 H0 Z M1.6 3.2 C2.8 3.2 3.4 2.6 3.6 1.5 H15.4 C15.6 2.6 16.2 3.2 17.4 3.2 V7.8 C16.2 7.8 15.6 8.4 15.4 9.5 H3.6 C3.4 8.4 2.8 7.8 1.6 7.8 Z" fill="#0a920a" fill-rule="evenodd"/><ellipse cx="9.5" cy="5.4" rx="2.4" ry="3" stroke="#0a920a" stroke-width="1.5" fill="none"/><rect x="9" y="4" width="1.1" height="2.8" fill="#0a920a"/></svg>
<div class="t" style="right:900.50px;top:577.00px;font-size:14.90px;line-height:18px;color:#212529;">A: 11.05.2023</div>
<div class="t" style="right:900.50px;top:601.00px;font-size:14.90px;line-height:18px;color:#212529;">R: 11.05.2023</div>
<div class="t" style="right:900.50px;top:625.00px;font-size:14.90px;line-height:18px;color:#212529;">L: 11.05.2023</div>
<div class="t" style="right:637.80px;top:577.00px;font-size:14.90px;line-height:18px;color:#212529;">A: 1142.40 €</div>
<div class="t" style="right:637.80px;top:601.00px;font-size:14.90px;line-height:18px;color:#212529;">R: 0.00 €</div>
<div class="t" style="right:550.20px;top:577.00px;font-size:14.90px;line-height:18px;color:#212529;">240 FL</div>
<div class="t" style="right:550.20px;top:601.00px;font-size:14.90px;line-height:18px;color:#212529;">288 kg</div>
<div class="t" style="left:859.20px;top:576.00px;font-size:15.60px;line-height:19px;color:#444;text-decoration:underline;text-decoration-thickness:1px;text-underline-offset:2px;">Berlin Weinbar Max Friendship</div>
<div class="t" style="left:859.20px;top:600.00px;font-size:15.60px;line-height:19px;color:#212529;">Schlegelstraße 5</div>
<div class="t" style="left:859.20px;top:624.00px;font-size:15.60px;line-height:19px;color:#212529;">10115 Berlin</div>
<svg style="position:absolute;left:1193.00px;top:593.00px;" width="21.00" height="24.00" viewBox="0 0 21 24"><path d="M14 19.5 V21.5 C14 22.3 13.3 23 12.5 23 H2.5 C1.7 23 1 22.3 1 21.5 V7.5 C1 6.7 1.7 6 2.5 6 H5" stroke="#053149" stroke-width="2.6" fill="none"/><path d="M5.5 2.5 C5.5 1.7 6.2 1 7 1 H15 L20 6 V17.5 C20 18.3 19.3 19 18.5 19 H7 C6.2 19 5.5 18.3 5.5 17.5 Z" stroke="#053149" stroke-width="2.6" fill="none" stroke-linejoin="round"/><path d="M14.5 1.5 V6.5 H19.5" stroke="#053149" stroke-width="1.6" fill="none"/></svg>
<svg style="position:absolute;left:1230.00px;top:593.00px;" width="28.00" height="24.00" viewBox="0 0 28 24"><path d="M14 4 H3 C1.9 4 1.1 4.8 1.1 5.9 V21 C1.1 22.1 1.9 22.9 3 22.9 H17.5 C18.6 22.9 19.4 22.1 19.4 21 V14.5" stroke="#053149" stroke-width="2.6" fill="none"/><path d="M22.5 1.8 L26.2 5.5 L13.5 18.2 L8.5 19.2 L9.5 14.2 Z" stroke="#053149" stroke-width="2.6" fill="none" stroke-linejoin="round"/><path d="M20 4.3 L23.7 8" stroke="#053149" stroke-width="2"/></svg>
<svg style="position:absolute;left:1281.00px;top:597.50px;" width="18.00" height="16.00" viewBox="0 0 18 16"><path d="M0 2 H18 M0 8 H18 M0 14 H18" stroke="#053149" stroke-width="3"/></svg>
<svg style="position:absolute;left:73.20px;top:697.00px;" width="16.00" height="16.00" viewBox="0 0 16 16"><rect x="0.8" y="0.8" width="14.2" height="14.2" rx="1.6" stroke="#c80b0b" stroke-width="1.6" fill="none"/><path d="M3.5 8.2 L6.6 11 L12.3 5" stroke="#c80b0b" stroke-width="2" fill="none"/></svg>
<svg style="position:absolute;left:103.20px;top:697.00px;" width="16.00" height="16.00" viewBox="0 0 16 16"><rect x="0.8" y="0.8" width="14.2" height="14.2" rx="1.6" stroke="#c80b0b" stroke-width="1.6" fill="none"/><path d="M7.9 3.0 V4.8 M7.9 11.2 V13.0" stroke="#c80b0b" stroke-width="1.6"/><path d="M10.100000000000001 6.3 C10.100000000000001 4.2 5.7 4.2 5.7 6.7 C5.7 8.7 10.100000000000001 8.3 10.100000000000001 9.3 C10.100000000000001 11.8 5.7 11.8 5.7 9.7" stroke="#c80b0b" stroke-width="1.7" fill="none"/></svg>
<svg style="position:absolute;left:132.20px;top:697.50px;" width="19.00" height="16.00" viewBox="0 0 19 16"><rect x="0.0" y="0.0" width="5.7" height="4.4" rx="0.6" fill="#cfcfcf"/><rect x="0.0" y="5.3" width="5.7" height="4.4" rx="0.6" fill="#cfcfcf"/><rect x="0.0" y="10.6" width="5.7" height="4.4" rx="0.6" fill="#cfcfcf"/><rect x="6.4" y="0.0" width="5.7" height="4.4" rx="0.6" fill="#cfcfcf"/><rect x="6.4" y="5.3" width="5.7" height="4.4" rx="0.6" fill="#cfcfcf"/><rect x="6.4" y="10.6" width="5.7" height="4.4" rx="0.6" fill="#cfcfcf"/><rect x="12.8" y="0.0" width="5.7" height="4.4" rx="0.6" fill="#cfcfcf"/><rect x="12.8" y="5.3" width="5.7" height="4.4" rx="0.6" fill="#cfcfcf"/><rect x="12.8" y="10.6" width="5.7" height="4.4" rx="0.6" fill="#cfcfcf"/></svg>
<svg style="position:absolute;left:74.80px;top:726.00px;" width="14.00" height="18.00" viewBox="0 0 14 18"><path d="M0 0 H8.5 V5.5 H13.3 V18 H0 Z" fill="#cfcfcf"/><path d="M9.3 0 L13.3 4.5 H9.3 Z" fill="#cfcfcf"/><path d="M3.8 14 V7.2 H6 C7.3 7.2 8 7.9 8 9 C8 10.1 7.3 10.8 6 10.8 H3.8 M6 10.8 L10.2 16.6 M10.2 12.2 L6.8 16.6" stroke="#fff" stroke-width="1.5" fill="none"/></svg>
<svg style="position:absolute;left:102.70px;top:726.00px;" width="18.00" height="18.00" viewBox="0 0 18 18"><rect x="1.2" y="0" width="10" height="4.8" rx="0.5" fill="#cfcfcf"/><rect x="2.6" y="1.7" width="7.2" height="1.5" fill="#fff"/><rect x="5.3" y="4.5" width="2" height="3" fill="#cfcfcf"/><path d="M1.2 7 H16.8 L17.7 15 V17.6 H0 V15 Z" fill="#cfcfcf"/><circle cx="3.8" cy="9.4" r="1" fill="#fff"/><circle cx="7.3" cy="9.4" r="1" fill="#fff"/><circle cx="10.8" cy="9.4" r="1" fill="#fff"/><circle cx="14.3" cy="9.4" r="1" fill="#fff"/><circle cx="5.5" cy="12.4" r="1" fill="#fff"/><circle cx="9.0" cy="12.4" r="1" fill="#fff"/><circle cx="12.5" cy="12.4" r="1" fill="#fff"/><rect x="5.3" y="14.7" width="7" height="2" fill="#fff" opacity="0.75"/></svg>
<svg style="position:absolute;left:131.00px;top:726.50px;" width="21.00" height="19.00" viewBox="0 0 21 19"><path d="M0.2 1.2 H3.2 L5.6 13.6 H18.3" stroke="#cfcfcf" stroke-width="2.3" fill="none" stroke-linejoin="round"/><path d="M4.2 2.3 H20.5 L18.8 10.8 H5.8 Z" fill="#cfcfcf"/><path d="M11.5 4.5 V9.5 M9 7.2 L11.5 9.8 L14 7.2" stroke="#fff" stroke-width="1.7" fill="none"/><circle cx="7" cy="16.2" r="1.9" fill="#cfcfcf"/><circle cx="17" cy="16.2" r="1.9" fill="#cfcfcf"/></svg>
<svg style="position:absolute;left:74.00px;top:758.00px;" width="16.00" height="12.00" viewBox="0 0 16 12"><rect x="0.7" y="0.7" width="13.8" height="9.6" rx="0.8" stroke="#053149" stroke-width="1.4" fill="none"/><path d="M1.2 1.6 L7.6 6.4 L14 1.6" stroke="#053149" stroke-width="1.4" fill="none"/></svg>
<svg style="position:absolute;left:102.80px;top:755.80px;" width="18.00" height="16.00" viewBox="0 0 18 16"><path d="M8.5 0.9 L16.2 14.2 H0.8 Z" stroke="#0a920a" stroke-width="1.6" fill="none" stroke-linejoin="round"/><rect x="7.6" y="5" width="1.8" height="4.8" rx="0.8" fill="#0a920a"/><circle cx="8.5" cy="11.6" r="1" fill="#0a920a"/></svg>
<svg style="position:absolute;left:132.20px;top:758.00px;" width="20.00" height="12.00" viewBox="0 0 20 12"><path d="M0 0 H19 V11 H0 Z M1.6 3.2 C2.8 3.2 3.4 2.6 3.6 1.5 H15.4 C15.6 2.6 16.2 3.2 17.4 3.2 V7.8 C16.2 7.8 15.6 8.4 15.4 9.5 H3.6 C3.4 8.4 2.8 7.8 1.6 7.8 Z" fill="#0a920a" fill-rule="evenodd"/><ellipse cx="9.5" cy="5.4" rx="2.4" ry="3" stroke="#0a920a" stroke-width="1.5" fill="none"/><rect x="9" y="4" width="1.1" height="2.8" fill="#0a920a"/></svg>
<div class="t" style="right:900.50px;top:694.00px;font-size:14.90px;line-height:18px;color:#212529;">A: 11.05.2023</div>
<div class="t" style="right:900.50px;top:718.00px;font-size:14.90px;line-height:18px;color:#212529;">R: 11.05.2023</div>
<div class="t" style="right:900.50px;top:742.00px;font-size:14.90px;line-height:18px;color:#212529;">L: 11.05.2023</div>
<div class="t" style="right:637.80px;top:694.00px;font-size:14.90px;line-height:18px;color:#212529;">A: 0.00 €</div>
<div class="t" style="right:637.80px;top:718.00px;font-size:14.90px;line-height:18px;color:#212529;">R: 0.00 €</div>
<div class="t" style="right:550.20px;top:694.00px;font-size:14.90px;line-height:18px;color:#212529;">6 FL</div>
<div class="t" style="right:550.20px;top:718.00px;font-size:14.90px;line-height:18px;color:#212529;">7 kg</div>
<div class="t" style="left:859.20px;top:693.00px;font-size:15.60px;line-height:19px;color:#444;text-decoration:underline;text-decoration-thickness:1px;text-underline-offset:2px;">Landgasthof zur Post</div>
<div class="t" style="left:859.20px;top:717.00px;font-size:15.60px;line-height:19px;color:#212529;">Hochstrasse 50</div>
<div class="t" style="left:859.20px;top:741.00px;font-size:15.60px;line-height:19px;color:#212529;">81541 München</div>
<svg style="position:absolute;left:1193.00px;top:710.00px;" width="21.00" height="24.00" viewBox="0 0 21 24"><path d="M14 19.5 V21.5 C14 22.3 13.3 23 12.5 23 H2.5 C1.7 23 1 22.3 1 21.5 V7.5 C1 6.7 1.7 6 2.5 6 H5" stroke="#053149" stroke-width="2.6" fill="none"/><path d="M5.5 2.5 C5.5 1.7 6.2 1 7 1 H15 L20 6 V17.5 C20 18.3 19.3 19 18.5 19 H7 C6.2 19 5.5 18.3 5.5 17.5 Z" stroke="#053149" stroke-width="2.6" fill="none" stroke-linejoin="round"/><path d="M14.5 1.5 V6.5 H19.5" stroke="#053149" stroke-width="1.6" fill="none"/></svg>
<svg style="position:absolute;left:1230.00px;top:710.00px;" width="28.00" height="24.00" viewBox="0 0 28 24"><path d="M14 4 H3 C1.9 4 1.1 4.8 1.1 5.9 V21 C1.1 22.1 1.9 22.9 3 22.9 H17.5 C18.6 22.9 19.4 22.1 19.4 21 V14.5" stroke="#053149" stroke-width="2.6" fill="none"/><path d="M22.5 1.8 L26.2 5.5 L13.5 18.2 L8.5 19.2 L9.5 14.2 Z" stroke="#053149" stroke-width="2.6" fill="none" stroke-linejoin="round"/><path d="M20 4.3 L23.7 8" stroke="#053149" stroke-width="2"/></svg>
<svg style="position:absolute;left:1281.00px;top:714.50px;" width="18.00" height="16.00" viewBox="0 0 18 16"><path d="M0 2 H18 M0 8 H18 M0 14 H18" stroke="#053149" stroke-width="3"/></svg>
<div class="t" style="left:253.50px;width:0;display:flex;justify-content:center;top:694.00px;font-size:14.90px;line-height:18px;color:#212529;"><span style="text-decoration:underline;text-underline-offset:2px;color:#444">20</span></div>
<div style="position:absolute;left:158.00px;top:142.00px;width:216.00px;height:548.00px;box-sizing:border-box;background:#fff;border:1px solid #9a9a9a;border-radius:0 0 4px 4px;box-shadow:0 2px 6px rgba(0,0,0,0.12);"></div>
<div class="t" style="left:165.20px;top:154.00px;font-size:15.60px;line-height:19px;color:#1a1f2b;">Bitte wählen</div>
<div class="t" style="left:165.20px;top:186.00px;font-size:15.60px;line-height:19px;color:#1a1f2b;">Rechnung: Ja</div>
<div class="t" style="left:165.20px;top:217.00px;font-size:15.60px;line-height:19px;color:#1a1f2b;">Rechnung: Nein</div>
<div class="t" style="left:165.20px;top:249.00px;font-size:15.60px;line-height:19px;color:#1a1f2b;">Storno: Ja</div>
<div style="position:absolute;left:159.00px;top:274.00px;width:214.00px;height:31.00px;background:#e0dfe6;"></div>
<div class="t" style="left:165.20px;top:281.00px;font-size:15.60px;line-height:19px;color:#1a1f2b;">Storno: Nein</div>
<div class="t" style="left:165.20px;top:312.00px;font-size:15.60px;line-height:19px;color:#1a1f2b;">Gutschrift: Ja</div>
<div class="t" style="left:165.20px;top:344.00px;font-size:15.60px;line-height:19px;color:#1a1f2b;">Gutschrift: Nein</div>
<div class="t" style="left:165.20px;top:376.00px;font-size:15.60px;line-height:19px;color:#1a1f2b;">Lieferschein: Ja</div>
<div class="t" style="left:165.20px;top:408.00px;font-size:15.60px;line-height:19px;color:#1a1f2b;">Lieferschein: Nein</div>
<div class="t" style="left:165.20px;top:439.00px;font-size:15.60px;line-height:19px;color:#1a1f2b;">Auftragsbestätigung: Ja</div>
<div class="t" style="left:165.20px;top:471.00px;font-size:15.60px;line-height:19px;color:#1a1f2b;">Auftragsbestätigung: Nein</div>
<div class="t" style="left:165.20px;top:503.00px;font-size:15.60px;line-height:19px;color:#1a1f2b;">Angebot: Ja</div>
<div class="t" style="left:165.20px;top:534.00px;font-size:15.60px;line-height:19px;color:#1a1f2b;">Angebot: Nein</div>
<div class="t" style="left:165.20px;top:566.00px;font-size:15.60px;line-height:19px;color:#1a1f2b;">Reservierung: Ja</div>
<div class="t" style="left:165.20px;top:598.00px;font-size:15.60px;line-height:19px;color:#1a1f2b;">Reservierung: Nein</div>
<div class="t" style="left:165.20px;top:629.00px;font-size:15.60px;line-height:19px;color:#1a1f2b;">Bestellung: Ja</div>
<div class="t" style="left:165.20px;top:661.00px;font-size:15.60px;line-height:19px;color:#1a1f2b;">Bestellung: Nein</div>
<div style="position:absolute;left:142.00px;top:67.00px;width:241.00px;height:642.00px;box-sizing:border-box;border:4px solid #ff2600;"></div>
</body></html>
